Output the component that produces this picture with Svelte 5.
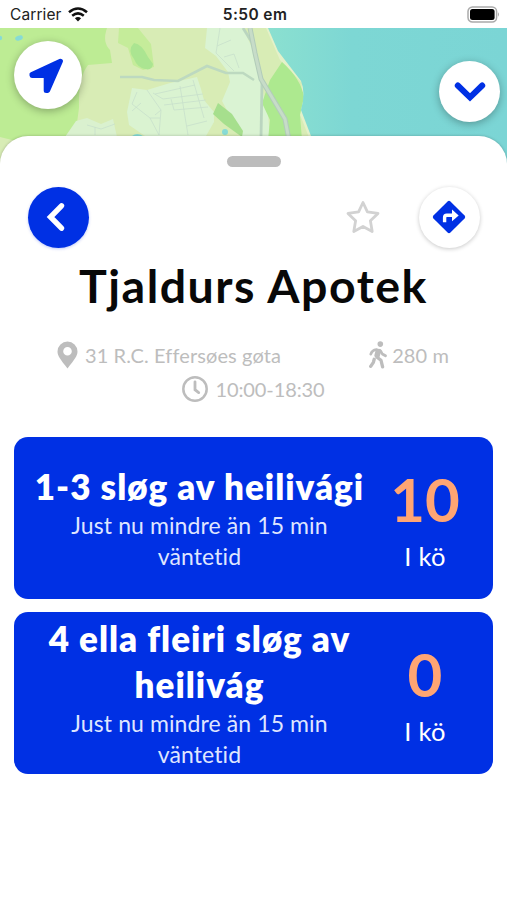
<script>
  const place = {
    name: "Tjaldurs Apotek",
    address: "31 R.C. Effersøes gøta",
    distance: "280 m",
    hours: "10:00-18:30",
  };

  const queues = [
    { title: "1-3 sløg av heilivági", wait: "Just nu mindre än 15 min väntetid", count: 10 },
    { title: "4 ella fleiri sløg av heilivág", wait: "Just nu mindre än 15 min väntetid", count: 0 },
  ];

  let favourite = false;
</script>

<style>
  :global(body) {
    margin: 0;
    background: #fff;
  }

  .screen {
    position: relative;
    width: 507px;
    height: 900px;
    overflow: hidden;
    background: #fff;
    font-family: Lato, "Open Sans", sans-serif;
    font-variant-ligatures: none;
  }

  button {
    display: flex;
    align-items: center;
    justify-content: center;
    box-sizing: border-box;
    padding: 0;
    border: none;
    background: none;
  }

  svg {
    display: block;
    flex: none;
  }

  .status {
    display: grid;
    grid-template-columns: 1fr auto 1fr;
    align-items: center;
    height: 28px;
    padding: 1px 7px 0 10px;
    box-sizing: border-box;
    font-family: Inter, sans-serif;
    font-size: 15.5px;
    color: #222;
  }
  .carrier {
    display: flex;
    align-items: center;
    gap: 6px;
    letter-spacing: 0.1px;
  }
  .clock {
    font-weight: 600;
    letter-spacing: 0.4px;
  }
  .battery {
    justify-self: end;
  }

  .map {
    position: relative;
    height: 108px;
  }
  .map > svg {
    position: absolute;
    top: 0;
    left: 0;
  }
  .float {
    position: absolute;
    border-radius: 50%;
    background: #fff;
    box-shadow: 0 2px 8px rgba(0, 0, 0, 0.3);
  }
  .locate {
    left: 14px;
    top: 13px;
    width: 68px;
    height: 68px;
  }
  .collapse {
    left: 439px;
    top: 33px;
    width: 61px;
    height: 61px;
  }

  .sheet {
    position: relative;
    height: 764px;
    box-sizing: border-box;
    padding: 20px 14px 0;
    border-radius: 28px 28px 0 0;
    background: #fff;
    box-shadow: 0 0 3px rgba(0, 0, 0, 0.25);
  }
  .handle {
    width: 54px;
    height: 11px;
    margin: 0 auto;
    border-radius: 6px;
    background: #bcbcbc;
  }

  .actions {
    display: flex;
    align-items: center;
    height: 61px;
    margin-top: 20px;
    padding: 0 13px 0 14px;
  }
  .back,
  .route {
    width: 61px;
    height: 61px;
    border-radius: 50%;
  }
  .back {
    padding: 0 3px 1px 0;
    background: #0030e4;
    box-shadow: 0 1px 3px rgba(0, 48, 228, 0.25);
  }
  .route {
    margin-left: 38px;
    padding: 0 1px 1px 0;
    box-shadow: 0 1px 4px rgba(0, 0, 0, 0.22);
  }
  .star {
    margin-left: auto;
  }

  h1 {
    margin: 7px 0 0;
    font-size: 46.5px;
    line-height: 60px;
    font-weight: 700;
    text-align: center;
    color: #080808;
    white-space: nowrap;
    letter-spacing: 1.5px;
  }

  .info {
    margin-top: 23px;
    font-size: 20px;
    line-height: 34px;
    color: #bdbdbd;
  }
  .line {
    display: flex;
    justify-content: space-between;
    padding: 0 44px 0 43px;
  }
  .line.center {
    justify-content: center;
    padding: 0;
  }
  .info span {
    display: flex;
    align-items: center;
    gap: 7px;
    white-space: nowrap;
    letter-spacing: 0.1px;
  }
  .info .distance {
    gap: 5px;
  }
  .info .hours {
    letter-spacing: -0.1px;
  }

  .queues {
    display: flex;
    flex-direction: column;
    gap: 13.5px;
    margin-top: 31px;
  }
  .queue {
    display: flex;
    align-items: center;
    box-sizing: border-box;
    width: 479px;
    height: 161.5px;
    padding: 0 18px 0 10px;
    border-radius: 14px;
    background: #0030e4;
    color: #fff;
    text-align: center;
  }
  .text {
    flex: 1;
    margin-top: -1px;
  }
  h2 {
    margin: 0 -8px;
    font-size: 35px;
    line-height: 46px;
    font-weight: 800;
    letter-spacing: 1px;
  }
  p {
    margin: 1px auto 0;
    width: 280px;
    font-size: 23px;
    line-height: 31px;
    letter-spacing: 0.1px;
    color: #dfe5ff;
  }
  .count {
    width: 100px;
    margin-top: 10px;
  }
  .number {
    font-size: 60px;
    line-height: 66px;
    font-weight: 700;
    color: #ffa573;
  }
  .label {
    font-size: 25.5px;
    line-height: 48px;
    letter-spacing: 0.3px;
  }
</style>

<div class="screen">
  <div class="status">
    <div class="carrier">
      Carrier
      <svg width="20" height="15" viewBox="0 0 20 15" fill="none" stroke="#111" stroke-width="2.6">
        <path d="M1 5.3Q10-2.3 19 5.3M4.2 8.7q5.8-4.6 11.6 0" />
        <path d="M10 14.4l-3.1-3.2q3.1-2.3 6.2 0z" fill="#111" stroke="none" />
      </svg>
    </div>
    <div class="clock">5:50 em</div>
    <svg class="battery" width="33" height="17" viewBox="0 0 33 17">
      <rect x="1" y="1" width="28.6" height="15" rx="4.5" fill="#fff" stroke="#aaa" stroke-width="1.5" />
      <rect x="3" y="3" width="24.6" height="11" rx="2.5" fill="#000" />
      <path d="M31 6.3q2 2.2 0 4.4z" fill="#aaa" />
    </svg>
  </div>

  <div class="map">
    <svg width="507" height="150" viewBox="0 28 507 150">
      <defs>
        <linearGradient id="sea">
          <stop offset="0" stop-color="#8be0d0" />
          <stop offset="0.35" stop-color="#7dd7d4" />
          <stop offset="1" stop-color="#7bd5d5" />
        </linearGradient>
      </defs>
      <rect y="28" width="507" height="150" fill="#d8ecb5" />
      <!-- woods -->
      <path d="M0 28H107Q102 42 110 50L112 63 88 65Q78 78 79 108L76 130 64 137 20 142 0 137z" fill="#bdec94" />
      <path d="M119 28H138L151 44 154 67 143 70 133 65 128 48 118 43z" fill="#c5ec9a" />
      <path d="M134 43q8 1 14 14l5 7q-1 7-8 5-8-2-11-10-7-9 0-16z" fill="#abe591" />
      <!-- built-up areas -->
      <path d="M207 28H243L253 50V74L268 112 270 140H243L222 101 230 82 228 72 216 56 205 48z" fill="#daf3d3" />
      <path d="M132 88L147 90 170 83 197 77 201 89 204 100 214 112V122L206 136H145L129 125 127 112z" fill="#daf3d1" />
      <path d="M76 121L87 118 101 124 113 119 117 137H65z" fill="#daf1cf" />
      <path d="M253 55L263 92 270 138H253z" fill="#daf3d3" />
      <path d="M218 103L232 114 243 131 242 137 224 124 213 114z" fill="#a6df8d" />
      <!-- shore and sea -->
      <path d="M266 28L280 60 302 83 299 112 310 140H520V28z" fill="#e4f1c9" />
      <path d="M268 140L270 120 262 103 270 80 282 62Q301 79 304 97L300 115 302 140z" fill="#ade98f" />
      <path d="M268 28L278 51 301 81Q306 93 301 110L311 136 330 178H507V28z" fill="url(#sea)" />
      <g fill="#87dbd5">
        <ellipse cx="19" cy="38" rx="4" ry="2.4" transform="rotate(-20 19 38)" />
        <circle cx="0" cy="38" r="2.2" />
        <circle cx="225" cy="132" r="3" />
        <path d="M132 136q5-4 11 0z" />
      </g>
      <!-- streets -->
      <g fill="none" stroke="#c8dfcb" stroke-width="0.8">
        <path d="M137 92l-5 12 18 14 9 17M147 90l14 20-2 25M155 94l40-9M153 93l10 6 40-5M180 86l8 49M193 80l11 38M164 105l42-5M150 118h10M171 99l3 11 34-3M132 111l9-8M161 110l-6 5M187 126l20-5" />
        <path d="M220 28l-4 25 18 18M217 46l14-6M224 57l10-3 5 14M87 125l14 4 14-5M95 127v8" />
      </g>
      <path d="M120 77H142L154 80 178 81 207 66 226 73H243L254 80" fill="none" stroke="#bdd9c0" stroke-width="2.6" />
      <path d="M262 83L261 137" fill="none" stroke="#bad5bf" stroke-width="2.8" />
      <path d="M243 28L253 44 262 83" fill="none" stroke="#bad5bf" stroke-width="2.8" />
      <path d="M250 28L255 53 261 79 285 119 289 140" fill="none" stroke="#b2ccb9" stroke-width="5" />
      <path d="M250 28L255 53 261 79 285 119 289 140" fill="none" stroke="#c7dcc8" stroke-width="3" />
    </svg>
    <button class="float locate" aria-label="Min position">
      <svg width="38" height="38" viewBox="0 0 38 38">
        <path d="M31.4 5.2L2.9 18.6 3.1 19.6H17.2V34.4H18.6z" fill="#0030e4" stroke="#0030e4" stroke-width="5" stroke-linejoin="round" />
      </svg>
    </button>
    <button class="float collapse" aria-label="Stäng">
      <svg width="34" height="22" viewBox="0 0 34 22" fill="none" stroke="#0030e4" stroke-width="6" stroke-linecap="round">
        <path d="M4.8 4.5L17 16.3 29.2 4.5" />
      </svg>
    </button>
  </div>

  <div class="sheet">
    <div class="handle"></div>
    <div class="actions">
      <button class="back" aria-label="Tillbaka">
        <svg width="24" height="32" viewBox="0 0 24 32" fill="none" stroke="#fff" stroke-width="5.4" stroke-linecap="round">
          <path d="M16.5 4.8L5.5 16 16.5 27.2" />
        </svg>
      </button>
      <button class="star" aria-label="Favorit" on:click={() => favourite = !favourite}>
        <svg width="36" height="35" viewBox="0 0 36 35" fill={favourite ? "#d2d2d2" : "none"} stroke="#d2d2d2" stroke-width="2.8" stroke-linejoin="round">
          <path d="M18 2.5L22.4 11.8 33 13.4 25.4 20.7 27.2 31.5 18 26.5 8.8 31.5 10.6 20.7 3 13.4 13.6 11.8z" />
        </svg>
      </button>
      <button class="route" aria-label="Vägbeskrivning">
        <svg width="34" height="34" viewBox="0 0 34 34">
          <rect x="5" y="5" width="24" height="24" rx="2" fill="#0030e4" transform="rotate(45 17 17)" />
          <path d="M12.6 22.3v-4.8q0-2.2 2.2-2.2h6" fill="none" stroke="#fff" stroke-width="3.4" />
          <path d="M20 9.6l6.7 5.8-6.7 5.8z" fill="#fff" />
        </svg>
      </button>
    </div>

    <h1>{place.name}</h1>

    <div class="info">
      <div class="line">
        <span>
          <svg width="21" height="28" viewBox="0 0 21 28">
            <path d="M10.5.5A10 10 0 0 0 .5 10.5C.5 15 3.5 18.5 10.5 27.5 17.5 18.5 20.5 15 20.5 10.5A10 10 0 0 0 10.5.5zm0 5.5a4.3 4.3 0 1 1 0 8.6 4.3 4.3 0 0 1 0-8.6z" fill="#bdbdbd" fill-rule="evenodd" />
          </svg>
          {place.address}
        </span>
        <span class="distance">
          <svg width="18" height="28" viewBox="0 0 18 28" fill="none" stroke="#bdbdbd" stroke-linecap="round" stroke-linejoin="round">
            <circle cx="11.3" cy="3.1" r="2.8" fill="#bdbdbd" stroke="none" />
            <path d="M1.8 13.2Q3 9.2 7.5 8.7M12 10.5l1.3 2.5 3.2 1.8" stroke-width="2.7" />
            <path d="M8.2 9.2l2.7.4-1.9 6.2-2.2-1.2z" fill="#bdbdbd" stroke-width="3" />
            <path d="M8 16.2L12 19.3 13.6 25.8M5.2 18.3L4.4 21.3 1.7 25.3" stroke-width="3.3" />
          </svg>
          {place.distance}
        </span>
      </div>
      <div class="line center">
        <span class="hours">
          <svg width="26" height="27" viewBox="0 0 26 27" fill="none" stroke="#bdbdbd" stroke-width="2.5">
            <circle cx="13" cy="13" r="11.7" />
            <path d="M13 5.8v7.9l3.7 2.9" stroke-width="2.8" stroke-linecap="round" />
          </svg>
          {place.hours}
        </span>
      </div>
    </div>

    <div class="queues">
      {#each queues as queue}
        <div class="queue">
          <div class="text">
            <h2>{queue.title}</h2>
            <p>{queue.wait}</p>
          </div>
          <div class="count">
            <div class="number">{queue.count}</div>
            <div class="label">I kö</div>
          </div>
        </div>
      {/each}
    </div>
  </div>
</div>
